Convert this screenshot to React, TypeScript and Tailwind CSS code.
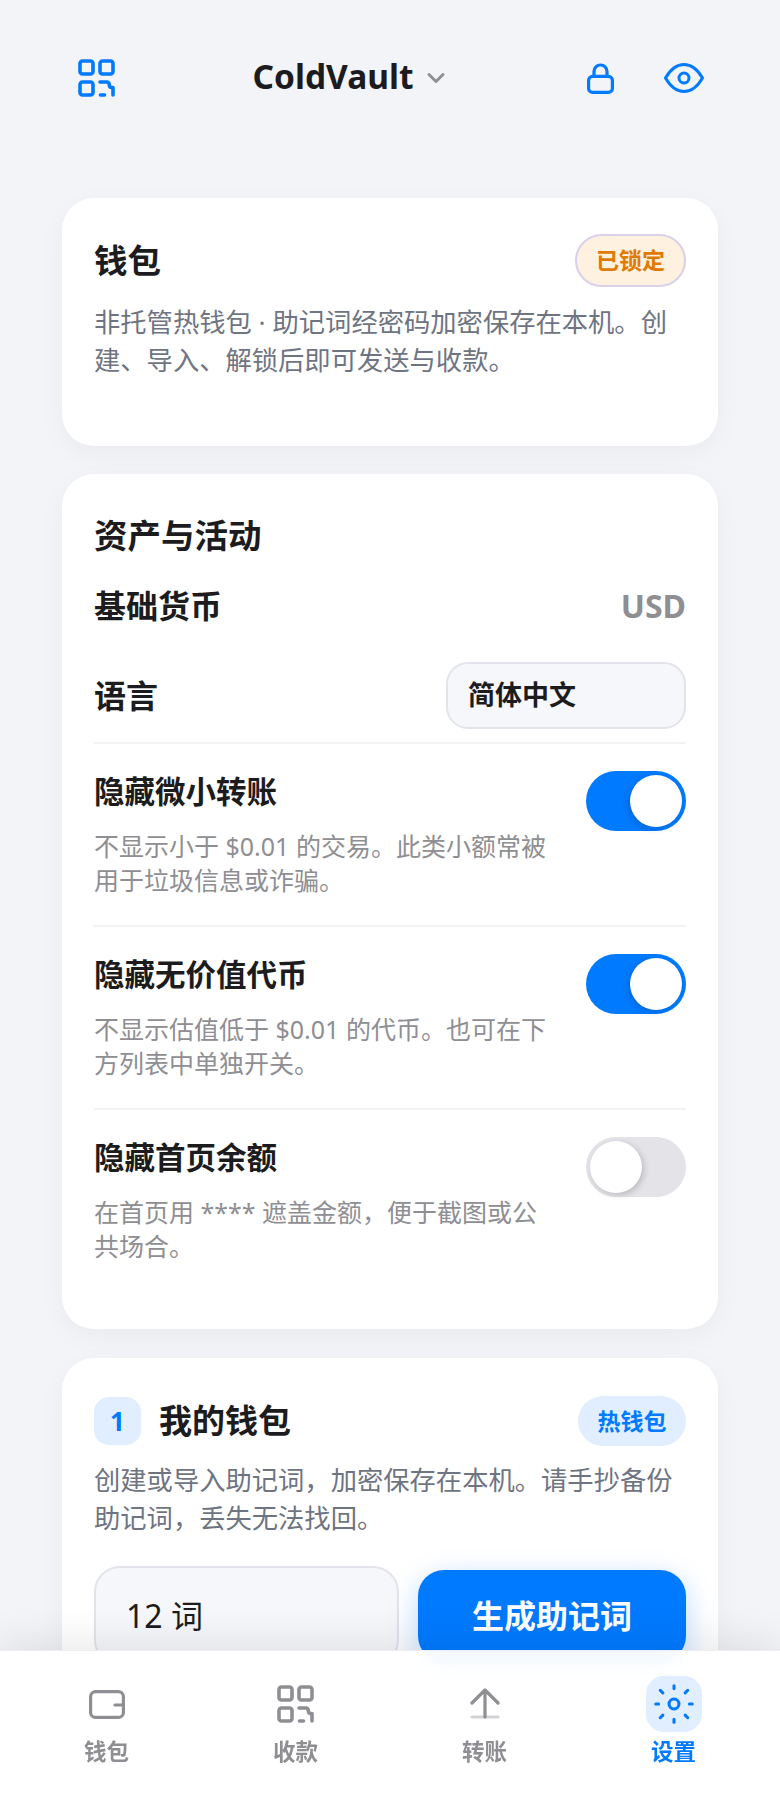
import { ChevronDown } from "lucide-react";

const font = "font-['Noto_Sans','Noto_Sans_CJK_SC',sans-serif]";

function QrIcon({ className }: { className: string }) {
  return (
    <svg viewBox="0 0 37 38" fill="none" stroke="currentColor" strokeWidth="3.6" strokeLinecap="round" strokeLinejoin="round" className={className}>
      <rect x="2" y="2" width="13" height="13" rx="2.5" />
      <rect x="22" y="2" width="13" height="13" rx="2.5" />
      <rect x="2" y="23" width="13" height="13" rx="2.5" />
      <path d="M22 23h7c1.500 0 2 .8 2.200 2.200.2 2 .8 3.300 2.300 3.300h1.500v7.500" />
      <path d="M22.500 36h4" />
    </svg>
  );
}

function Toggle({ on }: { on: boolean }) {
  return on ? (
    <div className="flex h-[60px] w-[100px] shrink-0 items-center justify-end rounded-full bg-[#007aff] pr-[4px]">
      <div className="h-[52px] w-[52px] rounded-full bg-white shadow-[-2px_2px_6px_rgba(0,0,0,0.16)]" />
    </div>
  ) : (
    <div className="flex h-[60px] w-[100px] shrink-0 items-center rounded-full bg-[#e3e3e8] pl-[4px]">
      <div className="h-[52px] w-[52px] rounded-full bg-white shadow-[2px_2px_6px_rgba(0,0,0,0.18)]" />
    </div>
  );
}

function ToggleRow(props: { title: string; desc: string; on: boolean; last?: boolean }) {
  return (
    <div className={props.last ? "flex justify-between pt-[27px]" : "flex justify-between border-b-2 border-[#f2f3f5] pt-[27px] pb-[27px]"}>
      <div className="w-[460px]">
        <div className="text-[30.500px] leading-[40px] font-bold text-[#1c1c1e]">{props.title}</div>
        <div className="mt-[18px] mb-[1px] text-[25px] leading-[34px] text-[#8e8e93]">{props.desc}</div>
      </div>
      <Toggle on={props.on} />
    </div>
  );
}

function NavItem(props: { label: string; active?: boolean; children: React.ReactNode }) {
  return (
    <div className="flex flex-col items-center">
      <div className={props.active ? "flex h-[56px] w-[56px] items-center justify-center rounded-[18px] bg-[#e0eeff] text-[#007aff]" : "flex h-[56px] w-[56px] items-center justify-center text-[#8e8e93]"}>
        {props.children}
      </div>
      <div className={props.active ? "mt-[4px] text-[22.500px] leading-[31px] font-bold text-[#007aff]" : "mt-[4px] text-[22.500px] leading-[31px] font-bold text-[#8e8e93]"}>
        {props.label}
      </div>
    </div>
  );
}

export default function App() {
  const sunRays = [
    "M30 10.500v3", "M30 46.500v3", "M10.500 30h3", "M46.500 30h3",
    "M15.300 15.300l2.700 2.700", "M42 42l2.700 2.700", "M15.300 44.700l2.700-2.700", "M42 18l2.700-2.700",
  ];

  return (
    <div className={`relative h-[1800px] w-[780px] overflow-hidden bg-[#f2f4f8] ${font}`}>
      {/* Header */}
      <header className="flex h-[156px] items-center justify-between pr-[76px] pl-[78px] text-[#007aff]">
        <QrIcon className="h-[38px] w-[37px]" />
        <div className="flex items-center gap-[8px]">
          <span className="pb-[4px] text-[33.500px] leading-[44px] font-bold text-[#1c1c1e]">ColdVault</span>
          <ChevronDown className="h-[28px] w-[28px] text-[#8e8e93]" strokeWidth={2.5} />
        </div>
        <div className="flex items-center gap-[50px]">
          <svg viewBox="0 0 27 31" fill="none" stroke="currentColor" strokeWidth="3.200" className="h-[31px] w-[27px]">
            <rect x="1.600" y="13.400" width="23.800" height="16" rx="4" />
            <path d="M7 13V8.500a6.500 6.500 0 0 1 13 0V13" />
          </svg>
          <svg viewBox="0 0 40 30" fill="none" stroke="currentColor" strokeWidth="3" strokeLinejoin="round" className="h-[30px] w-[40px]">
            <path d="M1.500 15C7 5.500 13 1.500 20 1.500S33 5.500 38.500 15C33 24.500 27 28.500 20 28.500S7 24.500 1.500 15Z" />
            <circle cx="20" cy="15" r="5" />
          </svg>
        </div>
      </header>

      <main className="mt-[42px] flex flex-col gap-[28px] px-[62px]">
        {/* Wallet status */}
        <section className="rounded-[32px] bg-white px-[32px] pt-[36px] pb-[67px] shadow-[0_8px_28px_rgba(0,0,0,0.04)]">
          <div className="flex items-center justify-between">
            <h2 className="pb-[2px] text-[33.500px] leading-[44px] font-bold text-[#1c1c1e]">钱包</h2>
            <span className="flex h-[53px] w-[111px] items-center justify-center rounded-full border-2 border-[#d9d0ea] bg-[#fff1e0] text-[23px] font-bold text-[#e07a00]">已锁定</span>
          </div>
          <p className="mt-[16px] text-[26.300px] leading-[38px] text-[#6e7482]">非托管热钱包 · 助记词经密码加密保存在本机。创建、导入、解锁后即可发送与收款。</p>
        </section>

        {/* Assets and activity */}
        <section className="mb-[1px] rounded-[32px] bg-white px-[32px] pt-[38px] pb-[65px] shadow-[0_8px_28px_rgba(0,0,0,0.04)]">
          <h2 className="text-[33.500px] leading-[46px] font-bold text-[#1c1c1e]">资产与活动</h2>
          <div className="mt-[27px] flex items-center justify-between">
            <span className="text-[32px] leading-[42px] font-bold text-[#1c1c1e]">基础货币</span>
            <span className="text-[32px] leading-[42px] font-bold text-[#8e8e93]">USD</span>
          </div>
          <div className="mt-[35px] flex items-center justify-between border-b-2 border-[#f2f3f5] pb-[13px]">
            <span className="text-[32px] leading-[42px] font-bold text-[#1c1c1e]">语言</span>
            <div className="flex h-[67px] w-[240px] items-center rounded-[22px] border-2 border-[#e3e4ea] bg-[#f6f7fb] px-[20px] text-[27px] font-bold text-[#1c1c1e]">简体中文</div>
          </div>
          <ToggleRow title="隐藏微小转账" desc="不显示小于 $0.01 的交易。此类小额常被用于垃圾信息或诈骗。" on />
          <ToggleRow title="隐藏无价值代币" desc="不显示估值低于 $0.01 的代币。也可在下方列表中单独开关。" on />
          <ToggleRow title="隐藏首页余额" desc="在首页用 **** 遮盖金额，便于截图或公共场合。" on={false} last />
        </section>

        {/* My wallet */}
        <section className="rounded-[32px] bg-white px-[32px] pt-[38px] pb-[40px] shadow-[0_8px_28px_rgba(0,0,0,0.04)]">
          <div className="flex items-center justify-between">
            <div className="flex items-center gap-[18px]">
              <span className="flex h-[48px] w-[47px] items-center justify-center rounded-[15px] bg-[#e0eeff] text-[26px] font-bold text-[#007aff]">1</span>
              <h2 className="text-[33px] leading-[44px] font-bold text-[#1c1c1e]">我的钱包</h2>
            </div>
            <span className="flex h-[50px] w-[108px] items-center justify-center rounded-full bg-[#e0eeff] text-[23px] font-bold text-[#007aff]">热钱包</span>
          </div>
          <p className="mt-[15px] text-[26.300px] leading-[38px] text-[#6e7482]">创建或导入助记词，加密保存在本机。请手抄备份助记词，丢失无法找回。</p>
          <div className="mt-[29px] flex items-center gap-[19px]">
            <div className="flex h-[100px] w-[305px] items-center rounded-[26px] border-2 border-[#e3e4ea] bg-[#f6f7fb] pl-[30px] text-[32px] text-[#1c1c1e]">12 词</div>
            <button className="h-[92px] flex-1 rounded-[26px] bg-[#007aff] text-[32px] font-bold text-white shadow-[0_8px_28px_rgba(0,122,255,0.28)]">生成助记词</button>
          </div>
        </section>
      </main>

      {/* Tab bar */}
      <nav className="absolute right-0 bottom-0 left-0 grid h-[150px] grid-cols-4 border-t border-[#ecedf1] bg-white/95 px-[12px] pt-[25px] shadow-[0_-8px_40px_rgba(0,0,0,0.09)] backdrop-blur">
        <NavItem label="钱包">
          <svg viewBox="0 0 36 29" fill="none" stroke="currentColor" strokeWidth="3.200" strokeLinecap="round" className="h-[29px] w-[36px]">
            <rect x="1.600" y="1.600" width="32.800" height="25.800" rx="5" />
            <path d="M26 15h8" />
          </svg>
        </NavItem>
        <NavItem label="收款">
          <QrIcon className="h-[38px] w-[37px]" />
        </NavItem>
        <NavItem label="转账">
          <svg viewBox="0 0 30 32" fill="none" stroke="currentColor" strokeWidth="3.200" strokeLinecap="round" strokeLinejoin="round" className="h-[32px] w-[30px]">
            <path d="M15 29V2M2 15L15 2l13 13" />
            <path d="M2 29h26" opacity="0.4" />
          </svg>
        </NavItem>
        <NavItem label="设置" active>
          <svg viewBox="0 0 60 60" fill="none" stroke="currentColor" strokeWidth="3.300" strokeLinecap="round" className="h-[60px] w-[60px]">
            <circle cx="30" cy="30" r="5.300" />
            {sunRays.map((d) => (
              <path key={d} d={d} />
            ))}
          </svg>
        </NavItem>
      </nav>
    </div>
  );
}
